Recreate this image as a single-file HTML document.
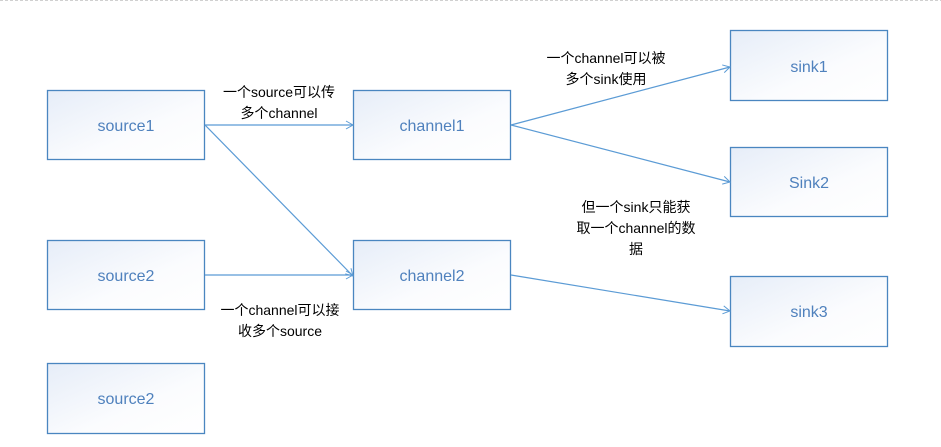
<!DOCTYPE html>
<html><head><meta charset="utf-8"><style>
html,body{margin:0;padding:0;background:#fff;}
svg{display:block;}
text{font-family:"Liberation Sans","Noto Sans CJK SC",sans-serif;}
</style></head><body>
<svg width="941" height="447" viewBox="0 0 941 447" xmlns="http://www.w3.org/2000/svg">
<defs>
<linearGradient id="g" x1="0" y1="0" x2="1" y2="1">
<stop offset="0" stop-color="#e6edf8"/><stop offset="0.6" stop-color="#fbfcfe"/><stop offset="1" stop-color="#ffffff"/>
</linearGradient>
<marker id="a" markerWidth="10" markerHeight="10" refX="8" refY="5" orient="auto" markerUnits="userSpaceOnUse">
<path d="M1,1 L8,5 L1,9" fill="none" stroke="#5b9bd5" stroke-width="1"/>
</marker>
</defs>
<line x1="0" y1="0.5" x2="941" y2="0.5" stroke="#d0d0d0" stroke-dasharray="3,2"/>
<g fill="url(#g)" stroke="#4a86c0" stroke-width="1.3">
<rect x="47.5" y="90.5" width="157" height="69"/>
<rect x="353.5" y="90.5" width="157" height="69"/>
<rect x="47.5" y="240.5" width="157" height="69"/>
<rect x="353.5" y="240.5" width="157" height="69"/>
<rect x="47.5" y="363.5" width="157" height="70"/>
<rect x="730.5" y="30.5" width="157" height="70"/>
<rect x="730.5" y="147.5" width="157" height="69"/>
<rect x="730.5" y="276.5" width="157" height="70"/>
</g>
<g stroke="#5b9bd5" stroke-width="1.2" marker-end="url(#a)">
<line x1="205" y1="125" x2="353" y2="125"/>
<line x1="205" y1="125" x2="353" y2="276"/>
<line x1="205" y1="275" x2="353" y2="275"/>
<line x1="511" y1="125" x2="730" y2="67"/>
<line x1="511" y1="125" x2="730" y2="182"/>
<line x1="511" y1="275" x2="730" y2="311"/>
</g>
<g fill="#4f81bd" font-size="16" text-anchor="middle">
<text x="126" y="131">source1</text>
<text x="432" y="131">channel1</text>
<text x="126" y="281">source2</text>
<text x="432" y="281">channel2</text>
<text x="126" y="404">source2</text>
<text x="809" y="72">sink1</text>
<text x="809" y="188">Sink2</text>
<text x="809" y="317">sink3</text>
</g>
<g fill="#000" font-size="14" text-anchor="middle">
<text x="279" y="97">一个source可以传</text>
<text x="279" y="118">多个channel</text>
<text x="280" y="315">一个channel可以接</text>
<text x="280" y="336">收多个source</text>
<text x="606" y="63">一个channel可以被</text>
<text x="606" y="84">多个sink使用</text>
<text x="636" y="212">但一个sink只能获</text>
<text x="636" y="233">取一个channel的数</text>
<text x="636" y="254">据</text>
</g>
</svg>
</body></html>
